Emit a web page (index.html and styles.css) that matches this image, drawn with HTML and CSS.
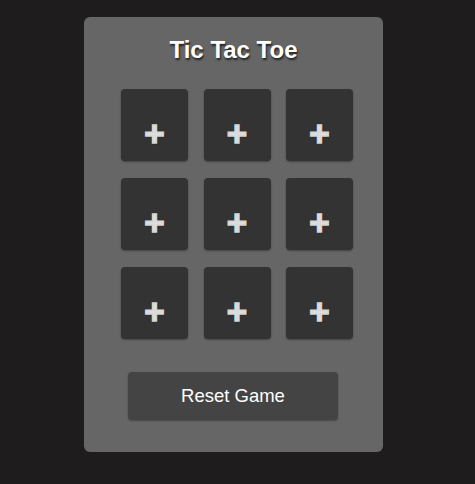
FILE: index.html
```html
<!DOCTYPE html>
<html lang="en">
  <head>
    <meta charset="UTF-8" />
    <meta name="viewport" content="width=device-width, initial-scale=1.0" />
    <title>Tic Tac Toe</title>

    <link rel="stylesheet" href="styles.css">
  </head>
  <body>
    <div class="game">
      <h1>Tic Tac Toe</h1>
      <div class="board">
        <div class="cell">+</div>
        <div class="cell">+</div>
        <div class="cell">+</div>
        <div class="cell">+</div>
        <div class="cell">+</div>
        <div class="cell">+</div>
        <div class="cell">+</div>
        <div class="cell">+</div>
        <div class="cell">+</div>
      </div>
      <button class="reset" type="button">Reset Game</button>
    </div>
  </body>
</html>
```

FILE: styles.css
```css
body {
  margin: 0;
  background-color: #1e1c1d;
  font-family: "Liberation Sans", Arial, sans-serif;
}

.game {
  width: 299px;
  height: 435px;
  box-sizing: border-box;
  margin: 17px 0 0 84px;
  padding-top: 19px;
  background-color: #666666;
  border-radius: 6px;
  display: flex;
  flex-direction: column;
  align-items: center;
}

.game h1 {
  margin: 0;
  color: #ffffff;
  font-size: 24px;
  font-weight: bold;
  line-height: 28px;
  text-shadow: 1px 2px 2px #222;
}

.board {
  align-self: flex-start;
  margin: 25px 0 0 37px;
  display: grid;
  grid-template-columns: repeat(3, 67px);
  grid-auto-rows: 72px;
  column-gap: 15.5px;
  row-gap: 17px;
}

.cell {
  background-color: #333333;
  border-radius: 4px;
  box-shadow: 0 1px 2px rgba(0, 0, 0, 0.35);
  display: flex;
  align-items: center;
  justify-content: center;
  padding-top: 18px;
  box-sizing: border-box;
  color: #dddddd;
  font-size: 35px;
  font-weight: bold;
  -webkit-text-stroke: 1.5px #d6d6d6;
  text-shadow: 1px 1px 1px #111;
}

.reset {
  margin-top: 33px;
  width: 210px;
  height: 48px;
  margin-left: -1px;
  background-color: #444444;
  color: #ffffff;
  border: none;
  border-radius: 4px;
  box-shadow: 0 1px 2px rgba(0, 0, 0, 0.3);
  font-family: "Liberation Sans", Arial, sans-serif;
  font-size: 18.5px;
}
```
